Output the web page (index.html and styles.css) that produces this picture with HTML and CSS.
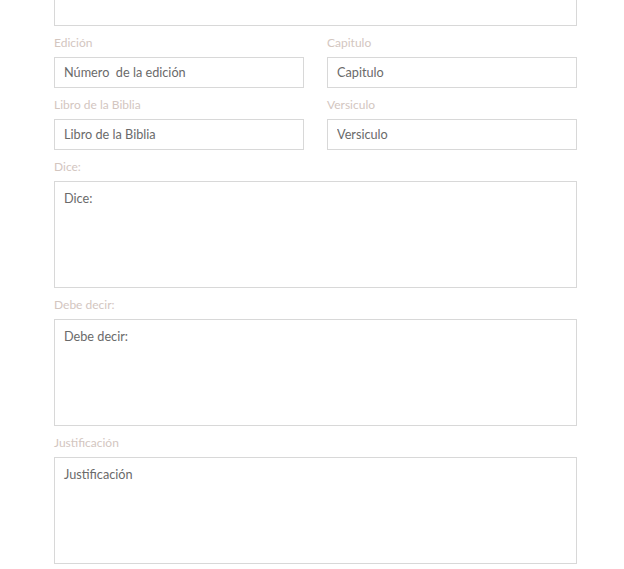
FILE: index.html
```html
<!DOCTYPE html>
<html lang="es">
<head>
<meta charset="utf-8">
<title>Formulario</title>
<link rel="stylesheet" href="styles.css">
</head>
<body>
<form class="form">
  <div class="field field-cut">
    <textarea class="area" aria-label="Campo anterior"></textarea>
  </div>
  <div class="row">
    <div class="field">
      <label class="label">Edición</label>
      <input class="input" type="text" placeholder="Número  de la edición">
    </div>
    <div class="field">
      <label class="label">Capitulo</label>
      <input class="input" type="text" placeholder="Capitulo">
    </div>
  </div>
  <div class="row">
    <div class="field">
      <label class="label">Libro de la Biblia</label>
      <input class="input" type="text" placeholder="Libro de la Biblia">
    </div>
    <div class="field">
      <label class="label">Versiculo</label>
      <input class="input" type="text" placeholder="Versiculo">
    </div>
  </div>
  <div class="field">
    <label class="label">Dice:</label>
    <textarea class="area" placeholder="Dice:"></textarea>
  </div>
  <div class="field">
    <label class="label">Debe decir:</label>
    <textarea class="area" placeholder="Debe decir:"></textarea>
  </div>
  <div class="field">
    <label class="label">Justificación</label>
    <textarea class="area" placeholder="Justificación"></textarea>
  </div>
</form>
</body>
</html>
```
FILE: styles.css
```css
html, body {
  margin: 0;
  padding: 0;
  background: #ffffff;
  overflow: hidden;
}
body {
  font-family: Lato, "Open Sans", sans-serif;
}
.form {
  width: 523px;
  margin: 0 0 0 54px;
  display: flex;
  flex-direction: column;
  gap: 8px;
}
.field {
  display: flex;
  flex-direction: column;
  min-width: 0;
}
.field-cut {
  margin-top: -81px;
}
.row {
  display: grid;
  grid-template-columns: 250px 250px;
  column-gap: 23px;
}
.label {
  display: block;
  font-size: 12px;
  line-height: 17px;
  color: #d3c6bf;
  margin: 0 0 6px;
  font-weight: 400;
}
.input,
.area {
  box-sizing: border-box;
  width: 100%;
  margin: 0;
  border: 1px solid #d8d8d8;
  border-radius: 0;
  background: #fff;
  font-family: Lato, "Open Sans", sans-serif;
  font-size: 12.7px;
  color: #666;
  outline: none;
}
.input {
  height: 31px;
  padding: 0 9px 2px;
}
.area {
  height: 107px;
  padding: 8px 9px;
  resize: none;
  display: block;
}
.input::placeholder,
.area::placeholder {
  color: #6a6a6a;
  opacity: 1;
}
```
